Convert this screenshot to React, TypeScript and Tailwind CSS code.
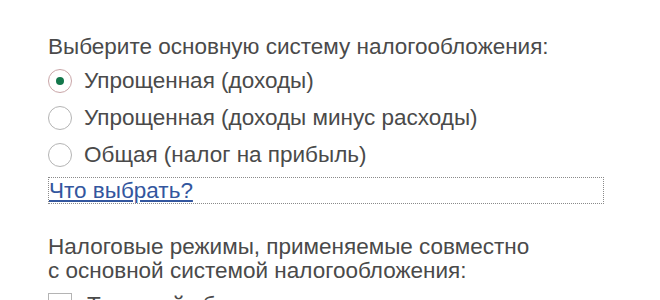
import React from "react";

function Radio({ checked, label }: { checked?: boolean; label: string }) {
  return (
    <div className="flex items-center h-[37px]">
      <span
        className={
          checked
            ? "w-[24px] h-[24px] rounded-full border border-[#caa6a8] bg-white flex items-center justify-center"
            : "w-[24px] h-[24px] rounded-full border border-[#b4b4b4] bg-white flex items-center justify-center"
        }
      >
        {checked && <span className="w-[8px] h-[8px] rounded-full bg-[#13774b]" />}
      </span>
      <span className="ml-[12px]">{label}</span>
    </div>
  );
}

export default function App() {
  return (
    <div
      className="w-[660px] h-[300px] overflow-hidden bg-white text-[#4a4a4a] text-[22.5px] leading-[24px] pl-[48px]"
      style={{ fontFamily: '"Liberation Sans", Arial, sans-serif' }}
    >
      <div className="pt-[35px]">Выберите основную систему налогообложения:</div>
      <div className="mt-[3px]">
        <Radio checked label="Упрощенная (доходы)" />
        <Radio label="Упрощенная (доходы минус расходы)" />
        <Radio label="Общая (налог на прибыль)" />
      </div>
      <div className="mt-[4px] w-[556px] h-[27px] border border-dotted border-[#8a8a8a] flex items-center">
        <a className="text-[#33569e] underline decoration-[#33569e] underline-offset-[2px]" href="#">
          Что выбрать?
        </a>
      </div>
      <div className="mt-[31px]">
        <div>Налоговые режимы, применяемые совместно</div>
        <div>с основной системой налогообложения:</div>
      </div>
      <div className="flex items-start h-[37px] mt-[10px]">
        <span className="w-[24px] h-[24px] border border-[#b4b4b4] bg-white" />
        <span className="ml-[15px] leading-[24px]">Торговый сбор</span>
      </div>
    </div>
  );
}
